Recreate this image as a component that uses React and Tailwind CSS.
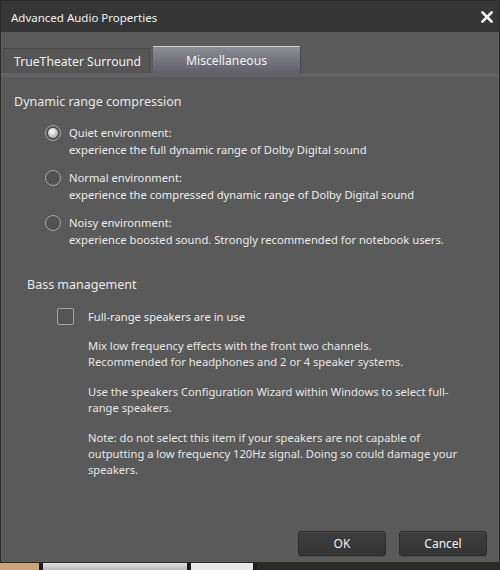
import React, { useState } from 'react';

const font = { fontFamily: '"Noto Sans", "Open Sans", sans-serif' };

const options = [
  { id: 'quiet', title: 'Quiet environment:', desc: 'experience the full dynamic range of Dolby Digital sound' },
  { id: 'normal', title: 'Normal environment:', desc: 'experience the compressed dynamic range of Dolby Digital sound' },
  { id: 'noisy', title: 'Noisy environment:', desc: 'experience boosted sound. Strongly recommended for notebook users.' },
];

const Radio = ({ checked }) => (
  <div className="w-[16px] h-[16px] shrink-0 rounded-full border-[1.5px] border-[#a8a8a8] bg-[#525252] flex items-center justify-center">
    {checked && (
      <div className="w-[10px] h-[10px] rounded-full bg-[radial-gradient(circle_at_40%_35%,#ffffff,#c4c4c4_55%,#8c8c8c)]" />
    )}
  </div>
);

const App = () => {
  const [mode, setMode] = useState('quiet');
  const [fullRange, setFullRange] = useState(false);

  return (
    <div className="w-[500px] h-[570px] flex flex-col bg-[#1c1c1c] select-none" style={font}>
      {/* Dialog */}
      <div className="h-[563px] flex flex-col border border-[#2b2b2b] bg-[#5a5a5a]">
        {/* Title bar */}
        <div className="h-[31px] shrink-0 flex items-center justify-between bg-[#363636] pl-[10px] pr-[6px] pt-[3px]">
          <span className="text-[11.5px] text-[#f2f2f2]">Advanced Audio Properties</span>
          <svg width="12" height="12" viewBox="0 0 12 12" className="mb-[2px]">
            <path d="M1.5 1.5 L10.5 10.5 M10.5 1.5 L1.5 10.5" stroke="#f4f4f4" strokeWidth="2.6" strokeLinecap="square" />
          </svg>
        </div>

        {/* Tabs */}
        <div className="flex items-end gap-[3px] pt-[14px] pl-[2px]">
          <div className="w-[147px] h-[25px] flex items-center pl-[10px] pt-[2px] rounded-t-[2px] border border-b-0 border-[#4a4a4a] bg-[#555555] text-[12.2px] text-[#f0f0f0]">
            TrueTheater Surround
          </div>
          <div className="w-[148px] h-[27px] flex items-center justify-center pt-[3px] rounded-tr-[2px] border-t border-t-[#d0d0d4] border-r border-r-[#4a4a4e] bg-[linear-gradient(#8c8c94,#606068)] text-[12.2px] text-[#f2f2f2]">
            Miscellaneous
          </div>
        </div>
        <div className="h-[4px] shrink-0 bg-[#626267]" />

        {/* Content */}
        <div className="flex-1 flex flex-col pt-[17px]">
          <div className="pl-[13px] text-[12.5px] leading-[16px] text-[#e8e8e8]">Dynamic range compression</div>

          <div className="flex flex-col gap-[11px] mt-[14px] pl-[44px]">
            {options.map((o) => (
              <div key={o.id} className="flex items-start gap-[8px] cursor-pointer" onClick={() => setMode(o.id)}>
                <div className="pt-[0.5px]">
                  <Radio checked={mode === o.id} />
                </div>
                <div className="text-[11.2px] leading-[17px] text-[#ececec] whitespace-nowrap">
                  <div>{o.title}</div>
                  <div>{o.desc}</div>
                </div>
              </div>
            ))}
          </div>

          <div className="mt-[29px] pl-[26px] text-[12.5px] leading-[16px] text-[#e8e8e8]">Bass management</div>

          <div className="flex items-center gap-[14px] mt-[14px] pl-[56px] cursor-pointer" onClick={() => setFullRange(!fullRange)}>
            <div className="w-[17px] h-[17px] shrink-0 rounded-[2px] border-[1.5px] border-[#a4a4a4] bg-[#555555] flex items-center justify-center">
              {fullRange && (
                <svg width="11" height="11" viewBox="0 0 11 11">
                  <path d="M1.5 5.5 L4.5 8.5 L9.5 2" stroke="#eeeeee" strokeWidth="2" fill="none" />
                </svg>
              )}
            </div>
            <span className="text-[11.2px] leading-[17px] pt-[1px] text-[#ececec]">Full-range speakers are in use</span>
          </div>

          <div className="flex flex-col gap-[14px] mt-[13px] pl-[87px] text-[11.2px] leading-[16px] text-[#e6e6e6] whitespace-nowrap">
            <p>
              Mix low frequency effects with the front two channels.
              <br />
              Recommended for headphones and 2 or 4 speaker systems.
            </p>
            <p>
              Use the speakers Configuration Wizard within Windows to select full-
              <br />
              range speakers.
            </p>
            <p>
              Note: do not select this item if your speakers are not capable of
              <br />
              outputting a low frequency 120Hz signal. Doing so could damage your
              <br />
              speakers.
            </p>
          </div>

          {/* Buttons */}
          <div className="mt-auto flex justify-end gap-[13px] pr-[12px] pb-[6px]">
            <button className="w-[88px] h-[25px] rounded-[3px] border border-[#2c2c2c] bg-[linear-gradient(#3e3e3e,#343434)] shadow-[inset_0_1px_0_#4a4a4a,0_1px_0_#4c4c4c] text-[12px] text-[#f2f2f2]">
              OK
            </button>
            <button className="w-[88px] h-[25px] rounded-[3px] border border-[#2c2c2c] bg-[linear-gradient(#3e3e3e,#343434)] shadow-[inset_0_1px_0_#4a4a4a,0_1px_0_#4c4c4c] text-[12px] text-[#f2f2f2]">
              Cancel
            </button>
          </div>
        </div>
      </div>

      {/* Windows behind */}
      <div className="flex-1 flex gap-[4px] bg-[#1e1e1e]">
        <div className="w-[39px] bg-[#c9a57e]" />
        <div className="w-[144px] bg-[linear-gradient(#e0e0e0,#b8b8b8)]" />
        <div className="w-[62px] bg-[#e8e8e8]" />
        <div className="flex-1 bg-[#2a2a26]" />
      </div>
    </div>
  );
};

export default App;
